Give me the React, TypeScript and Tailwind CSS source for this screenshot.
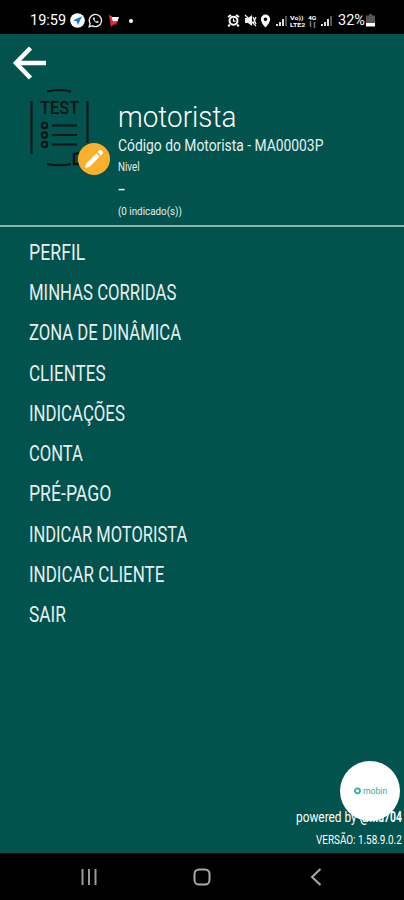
import React, { useLayoutEffect, useRef, useState } from 'react';

interface FitTextProps {
  width: number;
  className?: string;
  children: string;
}

// Squeezes a line of text horizontally so it takes exactly `width` pixels.
const FitText: React.FC<FitTextProps> = ({ width, className = '', children }) => {
  const ref = useRef<HTMLSpanElement>(null);
  const [scale, setScale] = useState(1);

  useLayoutEffect(() => {
    if (ref.current) setScale(width / ref.current.offsetWidth);
  }, [width, children]);

  return (
    <span className={`block whitespace-nowrap ${className}`} style={{ width }}>
      <span ref={ref} className="inline-block origin-left" style={{ transform: `scaleX(${scale})` }}>
        {children}
      </span>
    </span>
  );
};

const menuItems = [
  { label: 'PERFIL', width: 56 },
  { label: 'MINHAS CORRIDAS', width: 147 },
  { label: 'ZONA DE DINÂMICA', width: 152 },
  { label: 'CLIENTES', width: 77 },
  { label: 'INDICAÇÕES', width: 96 },
  { label: 'CONTA', width: 54 },
  { label: 'PRÉ-PAGO', width: 82 },
  { label: 'INDICAR MOTORISTA', width: 158 },
  { label: 'INDICAR CLIENTE', width: 135 },
  { label: 'SAIR', width: 37 },
];

const SignalIcon = () => (
  <svg width="12" height="12" viewBox="0 0 12 12" fill="#ddd">
    <path d="M0 9h2v2H0zM3 7h2v4H3zM6 4h2v7H6z" />
    <path d="M9 1h2v10H9z" fill="#555" />
  </svg>
);

const StatusBar = () => (
  <header className="flex h-[34px] items-center bg-black pt-[7px] text-white">
    <FitText width={36} className="ml-[30px] text-[14.5px] leading-4">19:59</FitText>
    <svg className="ml-1" width="15" height="15" viewBox="0 0 15 15">
      <circle cx="7.5" cy="7.5" r="7.3" fill="#fff" />
      <path d="M12 3.2 3 7.2l3.6 1L8 12z" fill="#1e78d2" />
    </svg>
    <svg className="ml-[3px]" width="15" height="15" viewBox="0 0 15 15" fill="none" stroke="#e5e5e5" strokeWidth="1.4">
      <path d="M1.2 13.8l.9-3.3a6.1 6.1 0 1 1 2.3 2.3z" />
      <path d="M5 4.6c-.5 2.6 2.6 5.8 5.3 5.4l.4-1.4-1.7-.8-.9.8L6.4 6.9l.7-.9-.7-1.6z" fill="#e5e5e5" stroke="none" />
    </svg>
    <svg className="ml-1.5" width="11" height="14" viewBox="0 0 11 14">
      <path d="M0 1l3 2h7L8.500 7.500l-5 .5z" fill="#fff" />
      <path d="M0 1l2.500 2 1.500 4.500 5-.5-2 3.500H4.500L2 13z" fill="#e3263a" />
    </svg>
    <span className="ml-[9px] size-1 rounded-full bg-white" />
    <svg className="ml-[94px]" width="13" height="13" viewBox="0 0 13 13" fill="none" stroke="#fff" strokeWidth="2">
      <path d="M1 3l3-2M12 3L9 1M3 11l-2 1M10 11l2 1" />
      <circle cx="6.5" cy="6.8" r="4" />
      <path d="M6.5 4.5v2.600h2" strokeWidth="1.2" />
    </svg>
    <svg className="ml-1" width="13" height="13" viewBox="0 0 13 13" fill="#eee">
      <path d="M1 4h3l4-3v11L4 9H1z" />
      <path d="M9 3l3 7M12 3L9 10M1 1l11 11" stroke="#eee" strokeWidth="1.3" />
    </svg>
    <svg className="ml-[3px]" width="11" height="14" viewBox="0 0 10 13">
      <path fillRule="evenodd" d="M5 .5a4.3 4.3 0 0 1 4.300 4.300C9.300 8 5 12.500 5 12.500S.7 8 .7 4.800A4.300 4.300 0 0 1 5 .5zm0 2.700a1.700 1.700 0 1 0 0 3.400 1.700 1.700 0 0 0 0-3.400z" fill="#fff" />
    </svg>
    <span className="ml-[5px]"><SignalIcon /></span>
    <span className="ml-[2px] text-[6px] leading-[7px] font-bold">
      <FitText width={13}>Vo))</FitText>
      <FitText width={15}>LTE2</FitText>
    </span>
    <span className="ml-[3px] text-[6px] leading-[7px] font-bold">
      <FitText width={9}>4G</FitText>
      <svg className="block" width="9" height="7" viewBox="0 0 9 7" stroke="#777" strokeWidth="1.5">
        <path d="M2.500 0v6M6.500 1v6" />
      </svg>
    </span>
    <span className="ml-[4px]"><SignalIcon /></span>
    <FitText width={27} className="ml-[5px] text-[14.5px] leading-4">32%</FitText>
    <svg className="ml-[1px]" width="9" height="13" viewBox="0 0 9 13">
      <path d="M3 0h3v1.500h3V9H0V1.500h3z" fill="#555" />
      <path d="M0 9h9v3.500H0z" fill="#fff" />
    </svg>
  </header>
);

const Avatar = () => (
  <div className="relative ml-[29px] h-[86px] w-[82px] shrink-0">
    <svg width="62" height="80" viewBox="0 0 62 80" fill="none" stroke="#061413">
      <path d="M18 3.500q12-3 24 0M18 76q12 2.500 24 0" strokeWidth="2" />
      <path d="M2.500 13v53M58.500 13v42" strokeWidth="2" />
      <path d="M52 76h-7V66l6-1" strokeWidth="2.5" />
      <g strokeWidth="2">
        <circle cx="15.5" cy="37.500" r="2.7" />
        <circle cx="15.5" cy="47" r="2.7" />
        <circle cx="15.5" cy="56.500" r="2.7" />
        <path d="M23 37.500h25M23 47h25M23 56.500h25" />
      </g>
    </svg>
    <FitText width={39} className="absolute top-[9px] left-[11px] text-[19px] leading-[22px] font-medium text-[#061413]">TEST</FitText>
    <div className="absolute top-[54.5px] left-[49px] flex size-8 items-center justify-center rounded-full bg-[#fbb02d]">
      <svg width="20" height="20" viewBox="0 0 20 20" fill="#fff">
        <path d="M1 19l1.200-4.600L12.400 4.200l3.400 3.400L5.600 17.800zM13.500 3.100l1.500-1.500q1.400-1.100 2.600 0l.9.900q1 1.200 0 2.400l-1.600 1.600z" />
      </svg>
    </div>
  </div>
);

const NavBar = () => (
  <nav className="flex h-[47px] items-center bg-black pl-[80px]">
    <svg width="18" height="18" viewBox="0 0 18 18" stroke="#999" strokeWidth="2">
      <path d="M2.5 1v16M9 1v16M15.5 1v16" />
    </svg>
    <svg className="ml-[95px]" width="18" height="18" viewBox="0 0 18 18" fill="none" stroke="#aaa" strokeWidth="2">
      <rect x="1.5" y="1.5" width="15" height="15" rx="4.5" />
    </svg>
    <svg className="ml-[99px]" width="12" height="18" viewBox="0 0 12 18" fill="none" stroke="#aaa" strokeWidth="2">
      <path d="M10.5 1L2 9l8.500 8" />
    </svg>
  </nav>
);

const App: React.FC = () => {
  return (
    <div className="flex h-[900px] w-[404px] flex-col overflow-hidden bg-[#02524d] font-['Roboto','Liberation_Sans',sans-serif] text-[#e6efed]">
      <StatusBar />

      <div className="h-[54px] pt-[12px] pl-[12px]">
        <svg width="34" height="34" viewBox="0 0 34 34" fill="none" stroke="#fff" strokeWidth="4.5">
          <path d="M18.500 2L4 17l14.500 15M3 17h31" />
        </svg>
      </div>

      <section className="flex h-[139px] items-start border-b-2 border-[#8fb0ac]">
        <Avatar />
        <div className="ml-[7px] pt-[12px]">
          <FitText width={118} className="text-[30px] leading-[34px] font-light text-white">motorista</FitText>
          <FitText width={205} className="text-[16px] leading-[24px]">Código do Motorista - MA00003P</FitText>
          <FitText width={22} className="text-[12px] leading-[18px]">Nivel</FitText>
          <FitText width={7} className="text-[18px] leading-[26px]">-</FitText>
          <FitText width={64} className="text-[11.5px] leading-[18px]">(0 indicado(s))</FitText>
        </div>
      </section>

      <ul className="pt-[5px] pl-[28.5px]">
        {menuItems.map((item) => (
          <li key={item.label} className="flex h-[40.3px] items-center">
            <FitText width={item.width} className="text-[21.5px] leading-[25px]">{item.label}</FitText>
          </li>
        ))}
      </ul>

      <footer className="relative mt-auto pr-[2px] pb-[1px]">
        <div className="flex justify-end gap-[3px] text-[14px] leading-[22px] text-white">
          <FitText width={61}>powered by</FitText>
          <FitText width={42} className="font-bold">@Mu704</FitText>
        </div>
        <div className="flex justify-end text-[13px] leading-[24px] text-white">
          <FitText width={86}>VERSÃO: 1.58.9.0.2</FitText>
        </div>
        <div className="absolute right-[4px] bottom-[32px] flex size-[60px] items-center justify-center gap-[2px] rounded-full bg-white text-[#35aaa0]">
          <svg width="7" height="8" viewBox="0 0 7 8" fill="none" stroke="currentColor" strokeWidth="1.8">
            <circle cx="3.5" cy="3.8" r="2.5" />
          </svg>
          <FitText width={24} className="text-[9px] leading-[10px]">mobin</FitText>
        </div>
      </footer>

      <NavBar />
    </div>
  );
};

export default App;
